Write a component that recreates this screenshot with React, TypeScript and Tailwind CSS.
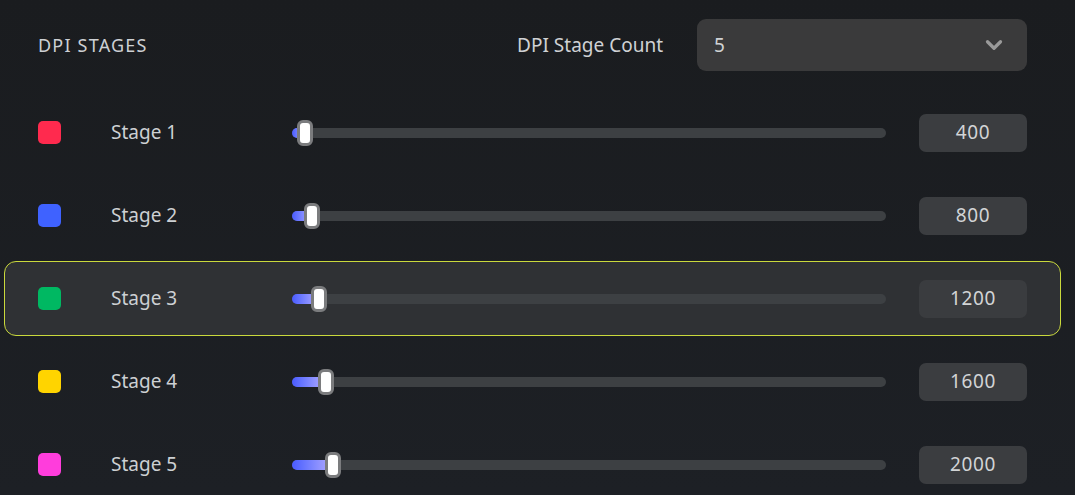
import React from "react";
import { ChevronDown } from "lucide-react";

const stages = [
  { name: "Stage 1", color: "bg-[#ff2a4e]", value: 400 },
  { name: "Stage 2", color: "bg-[#3f62ff]", value: 800 },
  { name: "Stage 3", color: "bg-[#00b862]", value: 1200, active: true },
  { name: "Stage 4", color: "bg-[#ffd400]", value: 1600 },
  { name: "Stage 5", color: "bg-[#ff3ddc]", value: 2000 },
];

function Slider({ value }: { value: number }) {
  const center = 13 + ((value - 400) / 400) * 7;
  return (
    <div className="relative flex-1 h-[26px] flex items-center">
      <div className="w-full h-[10px] rounded-full bg-[#3d4043]" />
      <div
        className="absolute left-0 top-[8px] h-[10px] rounded-full bg-gradient-to-r from-[#4a5aff] to-[#b4aaff]"
        style={{ width: center }}
      />
      <div
        className="absolute top-0 w-[16px] h-[26px] rounded-[6px] bg-white border-[3px] border-[#7b7c7e]"
        style={{ left: center - 8 }}
      />
    </div>
  );
}

export default function App() {
  return (
    <div
      className="w-[1075px] h-[495px] overflow-hidden bg-gradient-to-b from-[#1a1c1f] to-[#1d2025] pl-[4px] pr-[14px] pt-[19px]"
      style={{ fontFamily: '"Noto Sans", "DejaVu Sans", sans-serif' }}
    >
      <div className="flex items-center h-[52px] pl-[34px] pr-[34px]">
        <div className="text-[18px] text-[#cdd0d4] tracking-[1.2px]">DPI STAGES</div>
        <div className="ml-auto text-[19px] text-[#cfd1d4]">DPI Stage Count</div>
        <div className="ml-[34px] w-[330px] h-[52px] rounded-[9px] bg-[#3a3a3b] flex items-center pl-[17px] pr-[20px] text-[19px] text-[#d0d2d4]">
          <span>5</span>
          <ChevronDown className="ml-auto text-[#9a9a9a]" size={26} strokeWidth={3} />
        </div>
      </div>
      <div className="mt-[24px] flex flex-col gap-[8px]">
        {stages.map((s) => (
          <div
            key={s.name}
            className={`h-[75px] flex items-center px-[33px] rounded-[12px] border ${
              s.active ? "border-[#cad93c] bg-[#2f3134]" : "border-transparent"
            }`}
          >
            <div className={`w-[23px] h-[23px] rounded-[5px] ${s.color}`} />
            <div className="ml-[50px] w-[181px] text-[19px] text-[#cdd0d3]">{s.name}</div>
            <Slider value={s.value} />
            <div
              className={`ml-[33px] w-[108px] h-[38px] rounded-[7px] flex items-center justify-center text-[19px] tracking-[0.6px] text-[#d2d4d6] ${
                s.active ? "bg-[#3a3c3f]" : "bg-[#3b3d40]"
              }`}
            >
              {s.value}
            </div>
          </div>
        ))}
      </div>
    </div>
  );
}
